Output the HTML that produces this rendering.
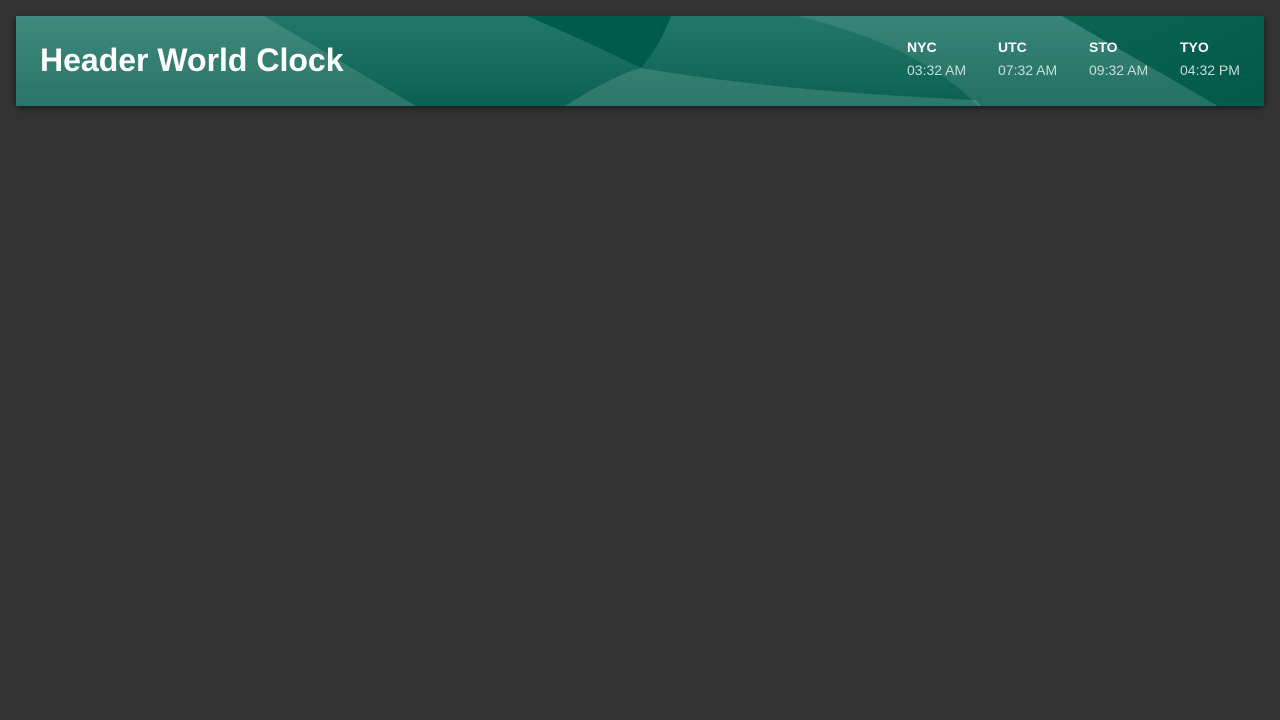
<!DOCTYPE html>
<html><head><style>
html,body{margin:0;padding:0;background:#333;width:1280px;height:720px;overflow:hidden;font-family:"Liberation Sans",sans-serif}
.h{position:absolute;left:16px;top:16px;width:1248px;height:90px;overflow:hidden;box-shadow:0 2px 6px rgba(0,0,0,.5)}
.h svg{position:absolute;left:0;top:0}
.t{position:absolute;left:24px;top:25px;color:#fff;font-size:32px;font-weight:bold;line-height:38px}
.c{position:absolute;top:22px;width:80px;font-size:14px}
.c b{display:block;color:#fff;line-height:18px}
.c span{display:block;color:#c9ddd8;margin-top:5px;line-height:18px}
</style></head><body>
<div class="h">
<svg width="1248" height="90" viewBox="0 0 1248 90">
<defs>
<linearGradient id="g" x1="0" y1="0" x2="0" y2="1"><stop offset="0" stop-color="#22776a"/><stop offset="1" stop-color="#0b6151"/></linearGradient>
<linearGradient id="d" x1="0" y1="0" x2="1" y2="1"><stop offset="0" stop-color="#0b6452"/><stop offset="1" stop-color="#005a47"/></linearGradient>
</defs>
<rect width="1248" height="90" fill="url(#g)"/>
<polygon points="0,0 248,0 400,90 0,90" fill="#ffffff" opacity="0.13"/>
<path d="M549,90 Q600,58 625,52 Q760,75 960,84 L965,90 Z" fill="#ffffff" opacity="0.14"/>
<path d="M782,0 Q905,30 962,90 L1202,90 L1046,0 Z" fill="#ffffff" opacity="0.1"/>
<path d="M511,0 L655,0 Q645,28 625,52 Q570,25 511,0 Z" fill="#005c4a"/>
<path d="M1046,0 L1248,0 L1248,90 L1202,90 Z" fill="url(#d)"/>
</svg>
<div class="t">Header World Clock</div>
<div class="c" style="left:891px"><b>NYC</b><span>03:32 AM</span></div>
<div class="c" style="left:982px"><b>UTC</b><span>07:32 AM</span></div>
<div class="c" style="left:1073px"><b>STO</b><span>09:32 AM</span></div>
<div class="c" style="left:1164px"><b>TYO</b><span>04:32 PM</span></div>
</div>
</body></html>
